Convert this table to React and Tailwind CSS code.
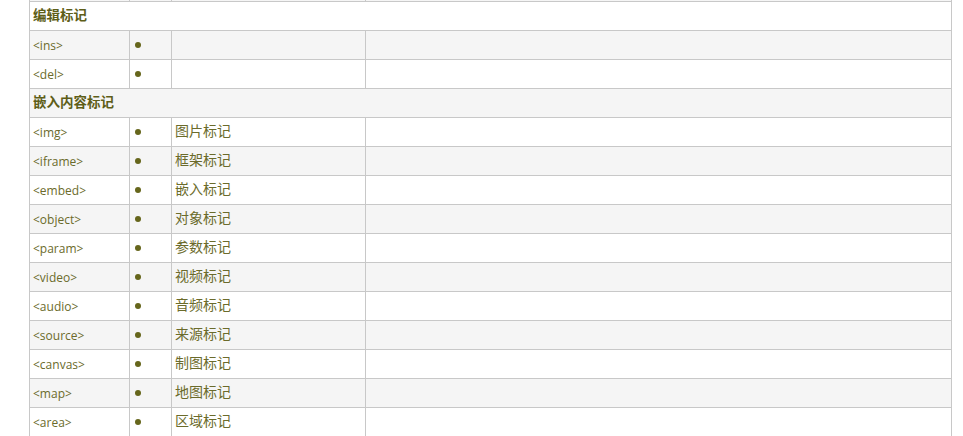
import React from "react";

const sections = [
  {
    title: "编辑标记",
    rows: [
      { tag: "<ins>", desc: "" },
      { tag: "<del>", desc: "" },
    ],
  },
  {
    title: "嵌入内容标记",
    rows: [
      { tag: "<img>", desc: "图片标记" },
      { tag: "<iframe>", desc: "框架标记" },
      { tag: "<embed>", desc: "嵌入标记" },
      { tag: "<object>", desc: "对象标记" },
      { tag: "<param>", desc: "参数标记" },
      { tag: "<video>", desc: "视频标记" },
      { tag: "<audio>", desc: "音频标记" },
      { tag: "<source>", desc: "来源标记" },
      { tag: "<canvas>", desc: "制图标记" },
      { tag: "<map>", desc: "地图标记" },
      { tag: "<area>", desc: "区域标记" },
    ],
  },
];

const cell = "border border-[#c8c8c8] h-[29px] p-0 px-[3px] align-middle";

const App = () => {
  // flatten so striping runs through headings too
  const lines = [{ type: "blank" }];
  sections.forEach((s) => {
    lines.push({ type: "head", title: s.title });
    s.rows.forEach((r) => lines.push({ type: "row", ...r }));
  });

  return (
    <div className="w-[963px] h-[436px] overflow-hidden bg-white font-['Open_Sans','Noto_Sans_CJK_SC',sans-serif] text-[#6b6b2b]">
      <table className="ml-[29px] mt-[-28px] w-[923px] border-collapse table-fixed">
        <colgroup>
          <col className="w-[100px]" />
          <col className="w-[42px]" />
          <col className="w-[194px]" />
          <col />
        </colgroup>
        <tbody>
          {lines.map((l, i) => {
            const bg = i % 2 === 0 ? "bg-[#f5f5f5]" : "bg-white";
            if (l.type === "blank") {
              return (
                <tr key={i} className={bg}>
                  <td className={cell}></td>
                  <td className={cell}></td>
                  <td className={cell}></td>
                  <td className={cell}></td>
                </tr>
              );
            }
            if (l.type === "head") {
              return (
                <tr key={i} className={bg}>
                  <td colSpan={4} className={`${cell} pb-[2px] text-[13.5px] leading-[20px] font-bold text-[#5e5e18]`}>
                    {l.title}
                  </td>
                </tr>
              );
            }
            return (
              <tr key={i} className={bg}>
                <td className={`${cell} pt-[1px] text-[12px]`}>{l.tag}</td>
                <td className={cell}>
                  <span className="block ml-[2px] w-[6px] h-[6px] rounded-full bg-[#66661c]"></span>
                </td>
                <td className={`${cell} pb-[3px] text-[14px] leading-[20px]`}>{l.desc}</td>
                <td className={cell}></td>
              </tr>
            );
          })}
        </tbody>
      </table>
    </div>
  );
};

export default App;
